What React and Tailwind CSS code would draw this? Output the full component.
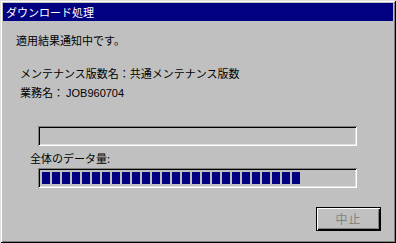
const font = { fontFamily: '"Noto Sans CJK JP", "MS UI Gothic", sans-serif' };

// full-width colon, kept at a full cell like the bitmap font draws it
function Colon() {
  return <span className="inline-block w-[11px] text-center">：</span>;
}

export default function App() {
  const blocks = Array.from({ length: 26 });

  return (
    <div
      className="w-[396px] h-[243px] bg-[#c0c0c0] p-[3px] flex flex-col text-[11px] leading-[14px] text-black shadow-[inset_1px_1px_#dfdfdf,inset_-1px_-1px_#000,inset_2px_2px_#fff,inset_-2px_-2px_#808080]"
      style={font}
    >
      {/* title bar */}
      <div className="h-[18px] bg-[#000080] text-white flex items-center pl-[3px]">
        ダウンロード処理
      </div>

      <div className="mt-[12px] pl-[13px]">適用結果通知中です。</div>
      <div className="mt-[19px] pl-[17px]">
        メンテナンス版数名<Colon />共通メンテナンス版数
      </div>
      <div className="mt-[5px] pl-[17px]">
        業務名<Colon />
        <span className="ml-[2px]" style={{ fontFamily: '"Liberation Sans", Arial, sans-serif' }}>JOB960704</span>
      </div>

      {/* current file progress */}
      <div className="mt-[26px] ml-[35px] w-[319px] h-[20px] shadow-[inset_1px_1px_#808080,inset_-1px_-1px_#fff,inset_2px_2px_#000,inset_-2px_-2px_#dfdfdf]" />

      <div className="mt-[5px] pl-[27px]">全体のデータ量:</div>

      {/* overall progress */}
      <div className="mt-[3px] ml-[35px] w-[319px] h-[20px] flex items-center gap-[2px] pl-[4px] shadow-[inset_1px_1px_#808080,inset_-1px_-1px_#fff,inset_2px_2px_#000,inset_-2px_-2px_#dfdfdf]">
        {blocks.map((_, i) => (
          <div key={i} className="w-[8px] h-[12px] bg-[#000080]" />
        ))}
      </div>

      <div className="mt-[19px] flex justify-end pr-[12px]">
        <button
          disabled
          className="w-[65px] h-[24px] border border-black bg-[#c0c0c0] text-[#808080] text-[12px] tracking-[1px] shadow-[inset_1px_1px_#fff,inset_-1px_-1px_#000,inset_-2px_-2px_#808080]"
          style={font}
        >
          中止
        </button>
      </div>
    </div>
  );
}
